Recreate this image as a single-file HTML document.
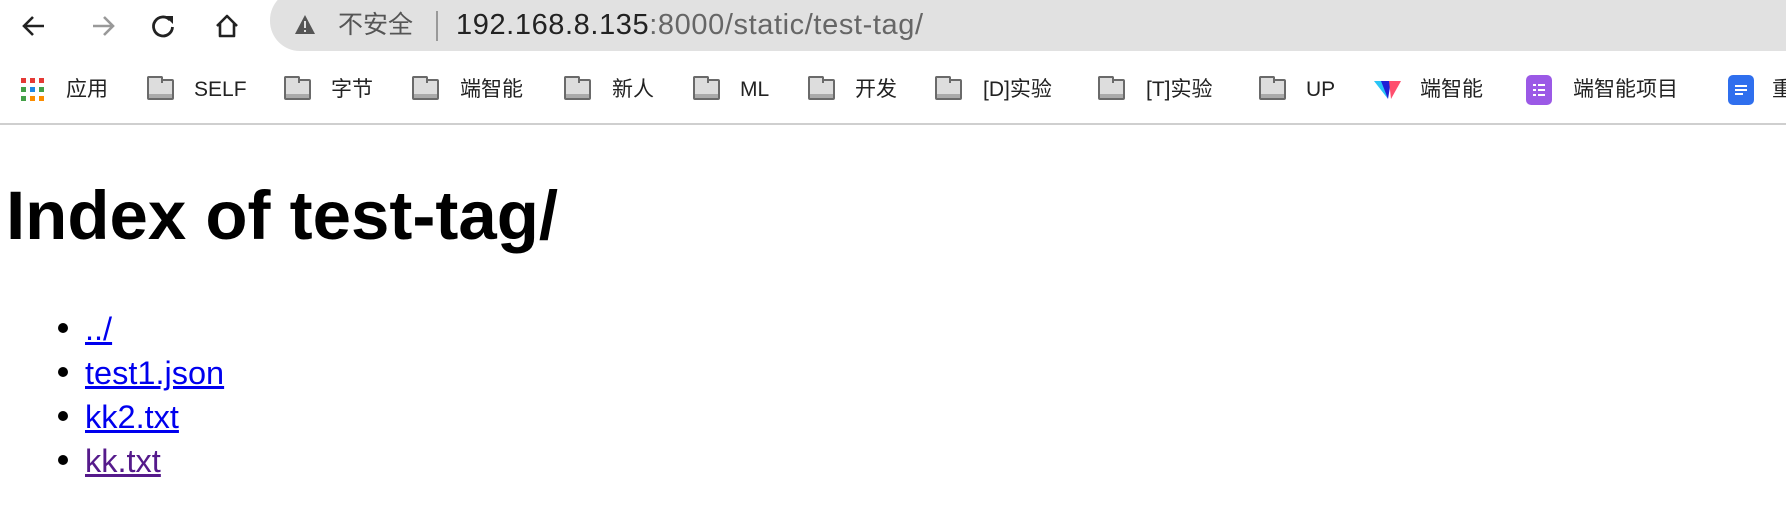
<!DOCTYPE html>
<html><head><meta charset="utf-8"><style>
*{margin:0;padding:0;box-sizing:border-box}
body{width:1786px;height:508px;background:#fff;position:relative;overflow:hidden;font-family:"Liberation Sans","Noto Sans CJK SC",sans-serif}
.a{position:absolute}
.bar{left:270px;top:-10px;width:1560px;height:61px;background:#e1e1e1;border-radius:30px}
.bm{top:79px;font-size:21px;line-height:22px;height:22px;color:#222;white-space:nowrap}
.fold{top:79px;width:27px;height:21px;border:2px solid #6a6a6a;border-radius:2px;background:#ddd}
.fold:before{content:"";position:absolute;left:-2px;top:-5px;width:12px;height:5px;border:2px solid #6a6a6a;border-bottom:none;border-radius:2px 2px 0 0;background:#ddd}
.fold:after{content:"";position:absolute;left:0;right:0;bottom:0;height:4px;background:#aaa}
h1{position:absolute;left:6px;top:181px;font-size:69px;font-weight:bold;line-height:70px;white-space:nowrap}
.li{left:85px;font-size:32.5px;line-height:40px}
.li a{color:#0000ee;text-decoration:underline}
.dot{left:58px;width:10px;height:10px;border-radius:50%;background:#000}
</style></head><body>
<div class="a bar"></div>
<svg class="a" style="left:18px;top:10px" width="32" height="32" viewBox="0 0 32 32"><path d="M26 16H7M15 7l-9 9 9 9" fill="none" stroke="#222" stroke-width="2.6"/></svg>
<svg class="a" style="left:87px;top:10px" width="32" height="32" viewBox="0 0 32 32"><path d="M6 16h19M17 7l9 9-9 9" fill="none" stroke="#999" stroke-width="2.6"/></svg>
<svg class="a" style="left:147px;top:10px" width="32" height="32" viewBox="0 0 32 32"><path d="M23 10A9.5 9.5 0 1 0 25.5 17" fill="none" stroke="#222" stroke-width="2.8"/><path d="M18 6h8v8z" fill="#222"/></svg>
<svg class="a" style="left:211px;top:10px" width="32" height="32" viewBox="0 0 32 32"><path d="M6 16L16 6l10 10M9 13v13h14V13" fill="none" stroke="#222" stroke-width="2.6" stroke-linejoin="round"/></svg>
<svg class="a" style="left:294px;top:14px" width="22" height="22" viewBox="0 0 22 22"><path d="M11 1L21 20H1z" fill="#555"/><rect x="10" y="7" width="2" height="7" fill="#e1e1e1"/><rect x="10" y="16" width="2" height="2" fill="#e1e1e1"/></svg>
<div class="a" style="left:338px;top:12px;font-size:25px;line-height:26px;color:#555">不安全</div>
<div class="a" style="left:436px;top:11px;width:2px;height:30px;background:#999"></div>
<div class="a" style="left:456px;top:9px;font-size:29px;line-height:32px;letter-spacing:0.6px;color:#222">192.168.8.135<span style="color:#666">:8000/static/test-tag/</span></div>
<svg class="a" style="left:20px;top:77px" width="26" height="26" viewBox="0 0 26 26"><rect x="1" y="1" width="5" height="5" fill="#e53935"/><rect x="10" y="1" width="5" height="5" fill="#e53935"/><rect x="19" y="1" width="5" height="5" fill="#e53935"/><rect x="1" y="10" width="5" height="5" fill="#43a047"/><rect x="10" y="10" width="5" height="5" fill="#1e88e5"/><rect x="19" y="10" width="5" height="5" fill="#43a047"/><rect x="1" y="19" width="5" height="5" fill="#43a047"/><rect x="10" y="19" width="5" height="5" fill="#fb8c00"/><rect x="19" y="19" width="5" height="5" fill="#fb8c00"/></svg>
<div class="a bm" style="left:66px">应用</div>
<div class="a fold" style="left:147px"></div><div class="a bm" style="left:194px">SELF</div>
<div class="a fold" style="left:284px"></div><div class="a bm" style="left:331px">字节</div>
<div class="a fold" style="left:412px"></div><div class="a bm" style="left:460px">端智能</div>
<div class="a fold" style="left:564px"></div><div class="a bm" style="left:612px">新人</div>
<div class="a fold" style="left:693px"></div><div class="a bm" style="left:740px">ML</div>
<div class="a fold" style="left:808px"></div><div class="a bm" style="left:855px">开发</div>
<div class="a fold" style="left:935px"></div><div class="a bm" style="left:983px">[D]实验</div>
<div class="a fold" style="left:1098px"></div><div class="a bm" style="left:1146px">[T]实验</div>
<div class="a fold" style="left:1259px"></div><div class="a bm" style="left:1306px">UP</div>
<svg class="a" style="left:1374px;top:79px" width="28" height="22" viewBox="0 0 28 22"><path d="M0 2h9l5 18z" fill="#29c5f6"/><path d="M7 2h10l-3 18z" fill="#1f1fd6"/><path d="M15 2h12l-10 18z" fill="#ff4f6e"/></svg>
<div class="a bm" style="left:1420px">端智能</div>
<svg class="a" style="left:1526px;top:75px" width="26" height="30" viewBox="0 0 26 30"><rect width="26" height="30" rx="5" fill="#9b59e6"/><g fill="#fff"><rect x="7" y="9" width="3" height="2"/><rect x="12" y="9" width="7" height="2"/><rect x="7" y="14" width="3" height="2"/><rect x="12" y="14" width="7" height="2"/><rect x="7" y="19" width="3" height="2"/><rect x="12" y="19" width="7" height="2"/></g></svg>
<div class="a bm" style="left:1573px">端智能项目</div>
<svg class="a" style="left:1728px;top:75px" width="26" height="30" viewBox="0 0 26 30"><rect width="26" height="30" rx="5" fill="#2f6fee"/><g fill="#fff"><rect x="7" y="10" width="12" height="2"/><rect x="7" y="14" width="12" height="2"/><rect x="7" y="18" width="8" height="2"/></g></svg>
<div class="a bm" style="left:1772px">重</div>
<div class="a" style="left:0;top:123px;width:1786px;height:2px;background:#cfcfcf"></div>
<h1>Index of test-tag/</h1>
<div class="a dot" style="top:323px"></div><div class="a li" style="top:309px"><a>../</a></div>
<div class="a dot" style="top:367px"></div><div class="a li" style="top:353px"><a>test1.json</a></div>
<div class="a dot" style="top:411px"></div><div class="a li" style="top:397px"><a>kk2.txt</a></div>
<div class="a dot" style="top:455px"></div><div class="a li" style="top:441px"><a style="color:#551a8b">kk.txt</a></div>
</body></html>
